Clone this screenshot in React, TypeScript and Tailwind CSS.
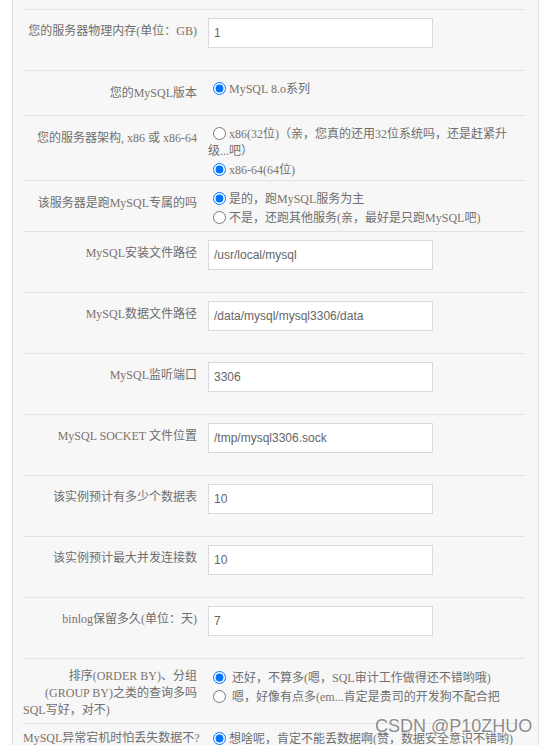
import React from "react";

// Latin runs are drawn in a warmer tone, like the serif text in the original form
function Mixed({ text }: { text: string }) {
  return (
    <>
      {text.split(/([\x20-\x7e]+)/).map((part, i) =>
        i % 2 ? (
          <span key={i} className="text-[#7e726a]">
            {part}
          </span>
        ) : (
          part
        )
      )}
    </>
  );
}

function Radio({ checked, text, name }: { checked?: boolean; text: string; name: string }) {
  return (
    <label className="block">
      <input
        type="radio"
        name={name}
        defaultChecked={checked}
        className="ml-[5px] mr-[3px] mt-[3px] h-[13px] w-[13px] align-[-2px]"
      />
      <Mixed text={text} />
    </label>
  );
}

function InputRow({ label, value }: { label: string; value: string }) {
  return (
    <div className="flex h-[61px] border-t border-[#e3e3e3]">
      <div className="w-[185px] shrink-0 pr-[11px] pt-[13px] text-right leading-[17px]">
        <Mixed text={label} />
      </div>
      <div className="pt-[8px]">
        <input
          defaultValue={value}
          className="h-[30px] w-[225px] border border-[#dadada] bg-white px-[5px] font-['Liberation_Sans',Arial,sans-serif] text-[12px] text-[#666] outline-none"
        />
      </div>
    </div>
  );
}

function RadioRow({
  label,
  name,
  options,
  height,
  top = "pt-[8px]",
}: {
  label: string;
  name: string;
  options: { text: string; checked?: boolean }[];
  height: string;
  top?: string;
}) {
  return (
    <div className={`flex border-t border-[#e3e3e3] ${height}`}>
      <div className={`w-[185px] shrink-0 whitespace-nowrap pr-[11px] text-right leading-[17px] ${top === "pt-[8px]" ? "pt-[14px]" : "pt-[6px]"}`}>
        <Mixed text={label} />
      </div>
      <div className={`w-[308px] leading-[17px] ${top}`}>
        {options.map((o) => (
          <Radio key={o.text} name={name} text={o.text} checked={o.checked} />
        ))}
      </div>
    </div>
  );
}

export default function App() {
  return (
    <div className="relative h-[745px] overflow-hidden bg-white">
      <div className="ml-[12px] min-h-[745px] w-[527px] border-x border-[#e2e2e2] bg-[#f7f7f7] pl-[10px] pr-[13px] font-['Liberation_Serif','Noto_Sans_CJK_SC',serif] text-[12px] text-[#6e6e6e]">
        <div className="h-[9px]" />
        <InputRow label="您的服务器物理内存(单位：GB)" value="1" />
        <RadioRow
          height="h-[45px]"
          label="您的MySQL版本"
          name="ver"
          options={[{ text: "MySQL 8.o系列", checked: true }]}
        />
        <RadioRow
          height="h-[65px]"
          label="您的服务器架构, x86 或 x86-64"
          name="arch"
          options={[
            { text: "x86(32位)（亲，您真的还用32位系统吗，还是赶紧升级...吧）" },
            { text: "x86-64(64位)", checked: true },
          ]}
        />
        <RadioRow
          height="h-[51px]"
          label="该服务器是跑MySQL专属的吗"
          name="dedicated"
          options={[
            { text: "是的，跑MySQL服务为主", checked: true },
            { text: "不是，还跑其他服务(亲，最好是只跑MySQL吧)" },
          ]}
        />
        <InputRow label="MySQL安装文件路径" value="/usr/local/mysql" />
        <InputRow label="MySQL数据文件路径" value="/data/mysql/mysql3306/data" />
        <InputRow label="MySQL监听端口" value="3306" />
        <InputRow label="MySQL SOCKET 文件位置" value="/tmp/mysql3306.sock" />
        <InputRow label="该实例预计有多少个数据表" value="10" />
        <InputRow label="该实例预计最大并发连接数" value="10" />
        <InputRow label="binlog保留多久(单位：天)" value="7" />

        <div className="flex h-[65px] border-t border-[#e3e3e3] leading-[17px]">
          <div className="w-[185px] shrink-0 pr-[11px] pt-[9px]">
            <div className="text-right">
              <Mixed text="排序(ORDER BY)、分组" />
            </div>
            <div className="text-right">
              <Mixed text="(GROUP BY)之类的查询多吗" />
            </div>
            <div className="text-left">
              <Mixed text="SQL写好，对不)" />
            </div>
          </div>
          <div className="w-[308px] pt-[9px] leading-[18px]">
            <Radio name="sort" checked text=" 还好，不算多(嗯，SQL审计工作做得还不错哟哦)" />
            <label className="block whitespace-nowrap">
              <input
                type="radio"
                name="sort"
                className="ml-[5px] mr-[3px] mt-[3px] h-[13px] w-[13px] align-[-2px]"
              />
              <Mixed text=" 嗯，好像有点多(em...肯定是贵司的开发狗不配合把" />
            </label>
          </div>
        </div>

        <RadioRow
          height="h-[60px]"
          top="pt-[5px]"
          label="MySQL异常宕机时怕丢失数据不?"
          name="safe"
          options={[{ text: "想啥呢，肯定不能丢数据啊(赞，数据安全意识不错哟)", checked: true }]}
        />
      </div>

      <div className="absolute left-[375px] top-[716px] font-['Liberation_Sans',Arial,sans-serif] text-[18px] leading-[21px] text-[#8c8c8c] [text-shadow:0_0_2px_#fff,0_0_2px_#fff]">
        CSDN @P10ZHUO
      </div>
    </div>
  );
}
